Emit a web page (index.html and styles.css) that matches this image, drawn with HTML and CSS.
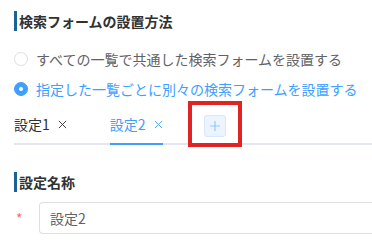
FILE: index.html
```html
<!DOCTYPE html>
<html lang="ja">
<head>
<meta charset="utf-8">
<link rel="stylesheet" href="styles.css">
</head>
<body>
<div class="page">
  <h3 class="section-title">検索フォームの設置方法</h3>
  <div class="radio-group">
    <label class="radio">
      <span class="radio-dot"></span>
      <span class="radio-label">すべての一覧で共通した検索フォームを設置する</span>
    </label>
    <label class="radio is-checked">
      <span class="radio-dot"></span>
      <span class="radio-label">指定した一覧ごとに別々の検索フォームを設置する</span>
    </label>
  </div>
  <div class="tabs">
    <div class="tab">設定1<svg class="close" viewBox="0 0 10 10" width="9" height="9"><path d="M1 1L9 9M9 1L1 9" stroke="currentColor" stroke-width="1" fill="none"/></svg></div>
    <div class="tab is-active">設定2<svg class="close" viewBox="0 0 10 10" width="9" height="9"><path d="M1 1L9 9M9 1L1 9" stroke="currentColor" stroke-width="1" fill="none"/></svg></div>
    <div class="add-wrap">
      <button class="add-btn"><svg viewBox="0 0 12 12" width="12" height="12"><path d="M6 1V11M1 6H11" stroke="currentColor" stroke-width="1.2" fill="none"/></svg></button>
      <span class="highlight"></span>
    </div>
  </div>
  <h3 class="section-title second">設定名称</h3>
  <div class="form-row">
    <span class="required">*</span>
    <div class="input">設定2</div>
  </div>
</div>
</body>
</html>
```

FILE: styles.css
```css
html, body {
  margin: 0;
  padding: 0;
  background: #fff;
  overflow: hidden;
}
body {
  font-family: "Noto Sans CJK JP", "Noto Sans", sans-serif;
  font-size: 14px;
  color: #606266;
}
.page {
  padding: 11px 0 0 14px;
}
.section-title {
  margin: 0;
  font-size: 14px;
  font-weight: bold;
  color: #303133;
  line-height: 20px;
  height: 20px;
  border-left: 3px solid #1b6196;
  padding-left: 2px;
}
.section-title.second {
  margin-top: 27px;
}
.radio-group {
  display: flex;
  flex-direction: column;
  gap: 10px;
  margin-top: 18px;
}
.radio {
  display: flex;
  align-items: center;
  height: 20px;
  gap: 8px;
  color: #606266;
}
.radio-dot {
  width: 14px;
  height: 14px;
  box-sizing: border-box;
  border: 1px solid #dcdfe6;
  border-radius: 50%;
  background: #fff;
  position: relative;
  flex: none;
}
.radio.is-checked .radio-dot {
  background: #409eff;
  border-color: #409eff;
}
.radio.is-checked .radio-dot::after {
  content: "";
  position: absolute;
  left: 50%;
  top: 50%;
  width: 4px;
  height: 4px;
  margin: -2px 0 0 -2px;
  border-radius: 50%;
  background: #fff;
}
.radio.is-checked .radio-label {
  color: #409eff;
}
.tabs {
  display: flex;
  align-items: stretch;
  height: 40px;
  margin-top: 6px;
  border-bottom: 2px solid #e4e7ed;
  box-sizing: border-box;
}
.tab {
  display: flex;
  align-items: center;
  gap: 8px;
  color: #303133;
  margin-bottom: -2px;
  border-bottom: 2px solid transparent;
  margin-right: 43px;
}
.tab.is-active {
  color: #409eff;
  border-bottom-color: #409eff;
  margin-right: 41px;
}
.close {
  display: block;
  color: #303133;
  margin-top: 1px;
}
.tab.is-active .close {
  color: #409eff;
}
.add-wrap {
  position: relative;
  display: flex;
  align-items: center;
}
.add-btn {
  width: 22px;
  height: 22px;
  padding: 0;
  box-sizing: border-box;
  border: 1px solid #d4e8ff;
  border-radius: 3px;
  background: #ecf5ff;
  color: #94c7ff;
  display: flex;
  align-items: center;
  justify-content: center;
  margin-top: 3px;
}
.highlight {
  position: absolute;
  left: -16px;
  top: -4px;
  width: 54px;
  height: 46px;
  box-sizing: border-box;
  border: 4px solid #e02323;
}
.form-row {
  display: flex;
  align-items: center;
  margin-top: 10px;
}
.required {
  width: 25px;
  color: #f56c6c;
  padding-left: 2px;
  box-sizing: border-box;
  font-size: 14px;
}
.input {
  flex: 1;
  height: 32px;
  box-sizing: border-box;
  border: 1px solid #dcdfe6;
  border-radius: 4px 0 0 4px;
  border-right: none;
  padding: 0 10px;
  line-height: 30px;
  color: #606266;
}
```
